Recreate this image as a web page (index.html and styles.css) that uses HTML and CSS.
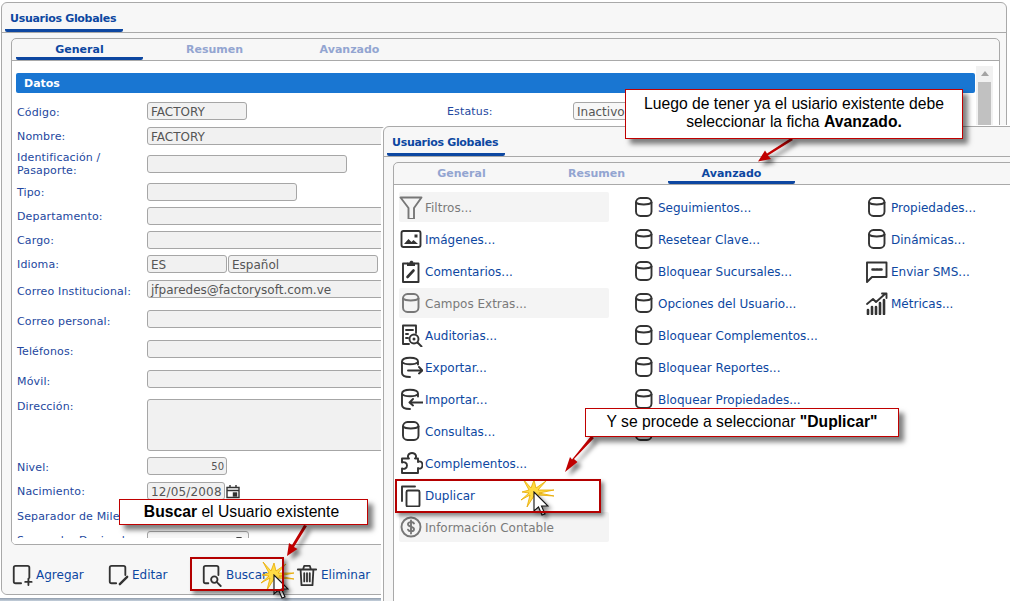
FILE: index.html
```html
<!DOCTYPE html>
<html lang="es">
<head>
<meta charset="utf-8">
<title>Usuarios Globales</title>
<link rel="stylesheet" href="styles.css">
</head>
<body>
<svg class="defs" width="0" height="0">
  <symbol id="db" viewBox="0 0 24 24"><rect x="4" y="3" width="15.500" height="18" rx="4.500"/><path d="M4 7.500c2.500 2.600 13 2.600 15.500 0"/></symbol>
  <symbol id="star" viewBox="-24 -18 48 36"><path d="M-10-13-2-4 1-12 3-4 13-11 5-2H21L6 1 21 4 5 3 4 9 1 4-6 15-3 3-12 8-4 1-11 0-4-2Z"/></symbol>
  <symbol id="cursor" viewBox="0 0 16 26"><path d="M1 1V20L5.500 16 9 24 12 23 8.500 15H15Z"/></symbol>
</svg>
<div class="stage">
  <section class="win">
    <header class="win-head"><span class="win-tab">Usuarios Globales</span></header>
    <div class="panel">
      <nav class="tabs">
        <span class="tab on">General</span><span class="tab">Resumen</span><span class="tab">Avanzado</span>
      </nav>
      <div class="panel-body">
        <div class="form">
          <h2 class="bar">Datos</h2>
          <div class="row first"><label class="lo1">Código:</label><div class="field w100">FACTORY</div><label class="status-label">Estatus:</label><div class="field w120">Inactivo</div></div>
          <div class="row g7"><label>Nombre:</label><div class="field wide">FACTORY</div></div>
          <div class="row g10"><label class="two">Identificación / Pasaporte:</label><div class="field w200"></div></div>
          <div class="row g10"><label>Tipo:</label><div class="field w150"></div></div>
          <div class="row"><label>Departamento:</label><div class="field wide"></div></div>
          <div class="row"><label>Cargo:</label><div class="field wide"></div></div>
          <div class="row"><label>Idioma:</label><div class="field w80">ES</div><div class="field w150 tight">Español</div></div>
          <div class="row g7"><label class="lo2">Correo Institucional:</label><div class="field wide">jfparedes@factorysoft.com.ve</div></div>
          <div class="row g12"><label class="lo2">Correo personal:</label><div class="field wide"></div></div>
          <div class="row g12"><label class="lo2">Teléfonos:</label><div class="field wide"></div></div>
          <div class="row g12"><label class="lo2">Móvil:</label><div class="field wide"></div></div>
          <div class="row g11 top"><label>Dirección:</label><div class="field wide area"></div></div>
          <div class="row"><label class="lo1">Nivel:</label><div class="field w80 num">50</div></div>
          <div class="row g7"><label>Nacimiento:</label><div class="field w78 date">12/05/2008</div>
            <svg class="cal" viewBox="0 0 14 15"><path d="M1 3.500h12v10H1zM1 6.500h12M4 1v3M10 1v3"/><rect x="7.500" y="9" width="3" height="3"/></svg></div>
          <div class="row g7"><label class="nowrap">Separador de Miles:</label><div class="field w100"></div></div>
          <div class="row"><label class="nowrap">Separador Decimal:</label><div class="field w102 sel"></div></div>
        </div>
        <div class="scroll"><i class="up"></i><i class="thumb"></i></div>
      </div>
    </div>
    <footer class="tools">
      <a class="tool t1"><svg viewBox="0 0 24 24"><path d="M11 21H5a2 2 0 0 1-2-2V4a2 2 0 0 1 2-2h13a2 2 0 0 1 2 2v11"/><path d="M19 16v7M15.500 19.500h7"/></svg>Agregar</a>
      <a class="tool t2"><svg viewBox="0 0 24 24"><path d="M10 21H5a2 2 0 0 1-2-2V4a2 2 0 0 1 2-2h13a2 2 0 0 1 2 2v8"/><path d="M14 22l8-8" class="thick"/></svg>Editar</a>
      <a class="tool t3"><svg viewBox="0 0 24 24"><path d="M8 21H5a2 2 0 0 1-2-2V4a2 2 0 0 1 2-2h12a2 2 0 0 1 2 2v8"/><circle cx="14.500" cy="17" r="3.500"/><path d="M17.500 20l4 4"/></svg>Buscar</a>
      <a class="tool t4"><svg viewBox="0 0 24 24"><path d="M2 6h20M8 5l1-3h6l1 3M5 6l1 17h12l1-17M9 10v9M12 10v9M15 10v9"/></svg>Eliminar</a>
    </footer>
  </section>
  <div class="base-line"></div>

  <section class="win over">
    <header class="win-head"><span class="win-tab">Usuarios Globales</span></header>
    <div class="panel">
      <nav class="tabs">
        <span class="tab">General</span><span class="tab">Resumen</span><span class="tab on">Avanzado</span>
      </nav>
      <div class="menu">
        <ul class="col">
          <li class="off"><svg viewBox="0 0 24 24"><path d="M1.500 2.500H22.500L15 13V24H9.500V13Z"/></svg>Filtros...</li>
          <li><svg viewBox="0 0 24 24"><rect x="2.500" y="4" width="19" height="16" rx="2"/><path class="fill" d="M5 17l4.500-5 3 3 2-2 4.500 4zM15.500 7.500h3v3h-3z"/></svg>Imágenes...</li>
          <li><svg viewBox="0 0 24 24"><path d="M8 4.500H4v18.500h15.500V4.500H16"/><path class="fill" d="M8 3.500h2.500c.3-2.500 3.700-2.500 4 0H16V7H8z"/><path class="thick" d="M8.500 18l6-6.500"/></svg>Comentarios...</li>
          <li class="off"><svg><use href="#db"/></svg>Campos Extras...</li>
          <li><svg viewBox="0 0 24 24"><path d="M10 21H4V2.500h13V10"/><path d="M7 7h7M7 11h2M7 15h2"/><circle cx="15" cy="16" r="4.500"/><circle class="fill" cx="15" cy="16" r="1.500"/><path d="M18.500 19.500l4 4"/></svg>Auditorias...</li>
          <li><svg viewBox="0 0 24 24"><path d="M19 9.500V6.500C19 1.500 3 1.500 3 6.500V18c0 3.500 4 4 8 4M3 7c2.500 3 13.500 3 16 0M9 15.500h14.500M20 12l3.500 3.500-3.500 3"/></svg>Exportar...</li>
          <li><svg viewBox="0 0 24 24"><path d="M19 9.500V6.500C19 1.500 3 1.500 3 6.500V18c0 3.500 4 4 8 4M3 7c2.500 3 13.500 3 16 0M11 15.500h13M14 12l-3.500 3.500 3.500 3"/></svg>Importar...</li>
          <li><svg><use href="#db"/></svg>Consultas...</li>
          <li><svg viewBox="0 0 24 24"><path d="M3 7.500h7c-2-1.500-1-5.500 3-5.500s5 4 3 5.500h3v3.500c2-1.500 4.500 0 4.500 3s-2.500 4.500-4.500 3v5H3v-4.500c2.500 1 5-.5 5-3s-2.500-4-5-3Z"/></svg>Complementos...</li>
          <li><svg viewBox="0 0 24 24"><path d="M3 18V3.500h13"/><rect x="7.500" y="7.500" width="13" height="16" rx="1.500"/></svg>Duplicar</li>
          <li class="off"><svg viewBox="0 0 24 24"><circle cx="12" cy="12" r="9.500"/><path d="M15 8.500c-1-2-6-2-6 .7 0 3 6 2 6 5 0 2.800-5 2.800-6 .5M12 5.500v13"/></svg>Información Contable</li>
        </ul>
        <ul class="col">
          <li><svg><use href="#db"/></svg>Seguimientos...</li>
          <li><svg><use href="#db"/></svg>Resetear Clave...</li>
          <li><svg><use href="#db"/></svg>Bloquear Sucursales...</li>
          <li><svg><use href="#db"/></svg>Opciones del Usuario...</li>
          <li><svg><use href="#db"/></svg>Bloquear Complementos...</li>
          <li><svg><use href="#db"/></svg>Bloquear Reportes...</li>
          <li><svg><use href="#db"/></svg>Bloquear Propiedades...</li>
          <li><svg><use href="#db"/></svg></li>
        </ul>
        <ul class="col">
          <li><svg><use href="#db"/></svg>Propiedades...</li>
          <li><svg><use href="#db"/></svg>Dinámicas...</li>
          <li><svg viewBox="0 0 24 24"><path d="M2 3.500h19.500v14.500H7l-5 5Z"/><path d="M7.500 10.500h2M11 10.500h2M14.500 10.500h2" class="thick"/></svg>Enviar SMS...</li>
          <li><svg viewBox="0 0 24 24"><path d="M2 13l6-5 3 3 9-8M17 2.500h4.500V7"/><path class="thick" d="M3 23v-4M7 23v-7M11 23v-7M15 23V12M19 23V9"/></svg>Métricas...</li>
        </ul>
      </div>
    </div>
  </section>

  <svg class="annot" viewBox="0 0 1010 601">
    <g class="arrows">
      <path d="M793 140 768 155.500 771 159 758 161.500 765 150.500 767 153.500 791 138Z"/>
      <path d="M594 438 574 459 577.500 462 565 472 570 457 572 459.500 591 436Z"/>
      <path d="M307 526 294 547 297.500 549 287 556 289 543 292 545 304 525Z"/>
    </g>
    <use class="star" href="#star" x="509" y="474" width="48" height="36"/>
    <use class="star" href="#star" x="249" y="557" width="48" height="36"/>
    <use class="cur" href="#cursor" x="533" y="491" width="16" height="26"/>
    <use class="cur" href="#cursor" x="273" y="574" width="16" height="26"/>
  </svg>

  <div class="mark mark-dup"></div>
  <div class="mark mark-bus"></div>

  <p class="note n1">Luego de tener ya el usiario existente debe<br>seleccionar la ficha <b>Avanzado.</b></p>
  <p class="note n2">Y se procede a seleccionar <b>"Duplicar"</b></p>
  <p class="note n3"><b>Buscar</b> el Usuario existente</p>
</div>
</body>
</html>
```
FILE: styles.css
```css
* { box-sizing: border-box; }
html, body { margin: 0; padding: 0; background: #fff; }
body { font-family: "DejaVu Sans", Verdana, sans-serif; font-size: 11px; color: #0d47a1; }
.defs { position: absolute; }
.stage { position: relative; width: 1010px; height: 601px; overflow: hidden; background: #fff; }

.win { width: 1006px; height: 593px; margin: 2px 0 0 1px; border: 1px solid #a9a9a9; border-radius: 6px; background: #f7f7f7; display: flex; flex-direction: column; }
.win-head { height: 30px; flex: none; padding-left: 3px; border-bottom: 1px solid #a9a9a9; display: flex; }
.win-tab { width: 118px; height: 29px; padding: 9px 0 0 5px; font-weight: 700; font-size: 11px; color: #0d47a1; border-bottom: 3px solid #0d47a1; border-radius: 0 0 2px 2px; white-space: nowrap; letter-spacing: -.3px; }

.panel { flex: 1; min-height: 0; margin: 5px 6px 0 9px; border: 1px solid #a9a9a9; border-radius: 5px; display: flex; flex-direction: column; overflow: hidden; }
.tabs { height: 22px; flex: none; display: flex; gap: 8px; padding-left: 4px; border-bottom: 1px solid #a9a9a9; }
.tab { width: 127px; height: 21px; text-align: center; font-weight: 700; font-size: 11px; line-height: 21px; color: #93a5d1; }
.tab.on { color: #0d47a1; border-bottom: 3px solid #0d47a1; border-radius: 0 0 2px 2px; }

.panel-body { flex: 1; min-height: 0; background: #fff; display: flex; gap: 1px; padding: 5px 5px 0 4px; overflow: hidden; }
.form { width: 959px; height: 472px; overflow: hidden; flex: none; padding-top: 7px; }
.bar { margin: 0; height: 20px; background: #1976d2; border-radius: 2px; color: #fff; font-size: 11px; line-height: 21px; padding-left: 8px; }
.row { display: flex; align-items: center; margin-top: 6px; min-height: 18px; }
.row.first { margin-top: 9px; }
.row.g7 { margin-top: 7px; }
.row.g10 { margin-top: 10px; }
.row.g11 { margin-top: 11px; }
.row.g12 { margin-top: 12px; }
.row.top { align-items: flex-start; }
.row.top label { padding-top: 1px; }
label { width: 131px; flex: none; padding-left: 1px; font-size: 11px; color: #23479e; line-height: 13px; letter-spacing: .15px; }
label.two { margin: -4px 0; }
label.nowrap { white-space: nowrap; }
label.lo1 { padding-top: 2px; }
label.lo2 { padding-top: 4px; }
.status-label { width: 127px; margin-left: 199px; }
.field { height: 18px; border: 1px solid #a6a6a6; border-radius: 3px; background: #f1f1f1; color: #555; font-size: 12px; line-height: 18px; padding-left: 3px; white-space: nowrap; overflow: hidden; flex: none; }
.w78 { width: 78px; }
.w80 { width: 80px; }
.w100 { width: 100px; }
.w102 { width: 102px; }
.w120 { width: 120px; background: #f7f7f7; }
.w150 { width: 150px; }
.w200 { width: 200px; }
.wide { width: 700px; }
.tight { margin-left: 1px; }
.area { height: 52px; }
.num { text-align: right; padding-right: 2px; font-size: 10px; }
.date { letter-spacing: .15px; }
.sel { background: #f7f7f7; position: relative; }
.sel::after { content: ""; position: absolute; right: 6px; top: 5px; border: 3.500px solid transparent; border-top: 4px solid #444; border-bottom: 0; }
.cal { width: 14px; height: 15px; margin-left: 1px; fill: none; stroke: #333; stroke-width: 1.400; }
.cal rect { fill: #333; }

.scroll { width: 17px; height: 472px; flex: none; background: #f1f1f1; display: flex; flex-direction: column; align-items: center; padding-top: 5px; }
.up { width: 0; height: 0; border: 4px solid transparent; border-bottom: 5px solid #a3a3a3; border-top: 0; }
.thumb { width: 13px; height: 300px; margin-top: 6px; background: #c1c1c1; }

.tools { height: 49px; flex: none; display: flex; align-items: center; padding: 11px 0 0 9px; background: #f7f7f7; border-radius: 0 0 6px 6px; }
.tool { display: flex; align-items: center; gap: 3px; color: #0d47a1; font-size: 12px; }
.tool svg { width: 22px; height: 24px; fill: none; stroke: #333; stroke-width: 2; stroke-linecap: round; stroke-linejoin: round; }
.t1 { width: 96px; }
.t2 { width: 94px; }
.t3 { width: 95px; }
.thick { stroke-width: 2.600; }

.base-line { height: 3px; margin-top: 3px; background: linear-gradient(#8f9cab, #c5d0dc); }

.over { position: absolute; left: 383px; top: 126px; width: 660px; height: 500px; margin: 0; box-shadow: -2px 0 0 #fff, 0 -1px 0 #fff; }
.over .panel { margin: 5px 0 0 9px; background: #f7f7f7; }
.menu { flex: 1; min-height: 0; background: #fff; display: flex; gap: 23px; padding: 7px 0 0 5px; }
.col { list-style: none; margin: 0; padding: 0; width: 210px; display: flex; flex-direction: column; gap: 2px; flex: none; }
.col li { height: 30px; display: flex; align-items: center; padding-top: 2px; font-size: 12px; color: #0d47a1; white-space: nowrap; border-radius: 2px; }
.col svg { width: 24px; height: 24px; margin: -2px 2px 0 0; flex: none; fill: none; stroke: #333; stroke-width: 1.900; stroke-linecap: round; stroke-linejoin: round; }
.col li.off { background: #f4f4f4; color: #7a7a7a; }
.col li.off svg { stroke: #777; }
.fill { fill: #333; stroke: none; }

.annot { position: absolute; left: 0; top: 0; width: 1010px; height: 601px; pointer-events: none; }
.arrows { fill: #c00000; filter: drop-shadow(4px 4px 2px rgba(0,0,0,.5)); }
.star { fill: #ffdc45; stroke: #e7a800; stroke-width: .8; }
.cur { fill: #fff; stroke: #111; stroke-width: 1.100; filter: drop-shadow(3px 3px 2px rgba(0,0,0,.45)); }

.mark { position: absolute; border: 2px solid #b40000; box-shadow: 3px 3px 4px rgba(0,0,0,.45); }
.mark-dup { left: 395px; top: 479px; width: 206px; height: 34px; }
.mark-bus { left: 190px; top: 557px; width: 94px; height: 34px; }

.note { position: absolute; margin: 0; background: #fff; border: 1px solid #c00000; box-shadow: 5px 5px 5px rgba(0,0,0,.5); color: #000; font-family: "Liberation Sans", Arial, sans-serif; font-size: 15.700px; line-height: 18px; text-align: center; white-space: nowrap; }
.n1 { left: 625px; top: 89px; width: 338px; height: 50px; padding-top: 5px; }
.n2 { left: 585px; top: 408px; width: 314px; height: 29px; padding-top: 4px; }
.n3 { left: 119px; top: 499px; width: 249px; height: 26px; padding: 3px 4px 0 0; }
```
